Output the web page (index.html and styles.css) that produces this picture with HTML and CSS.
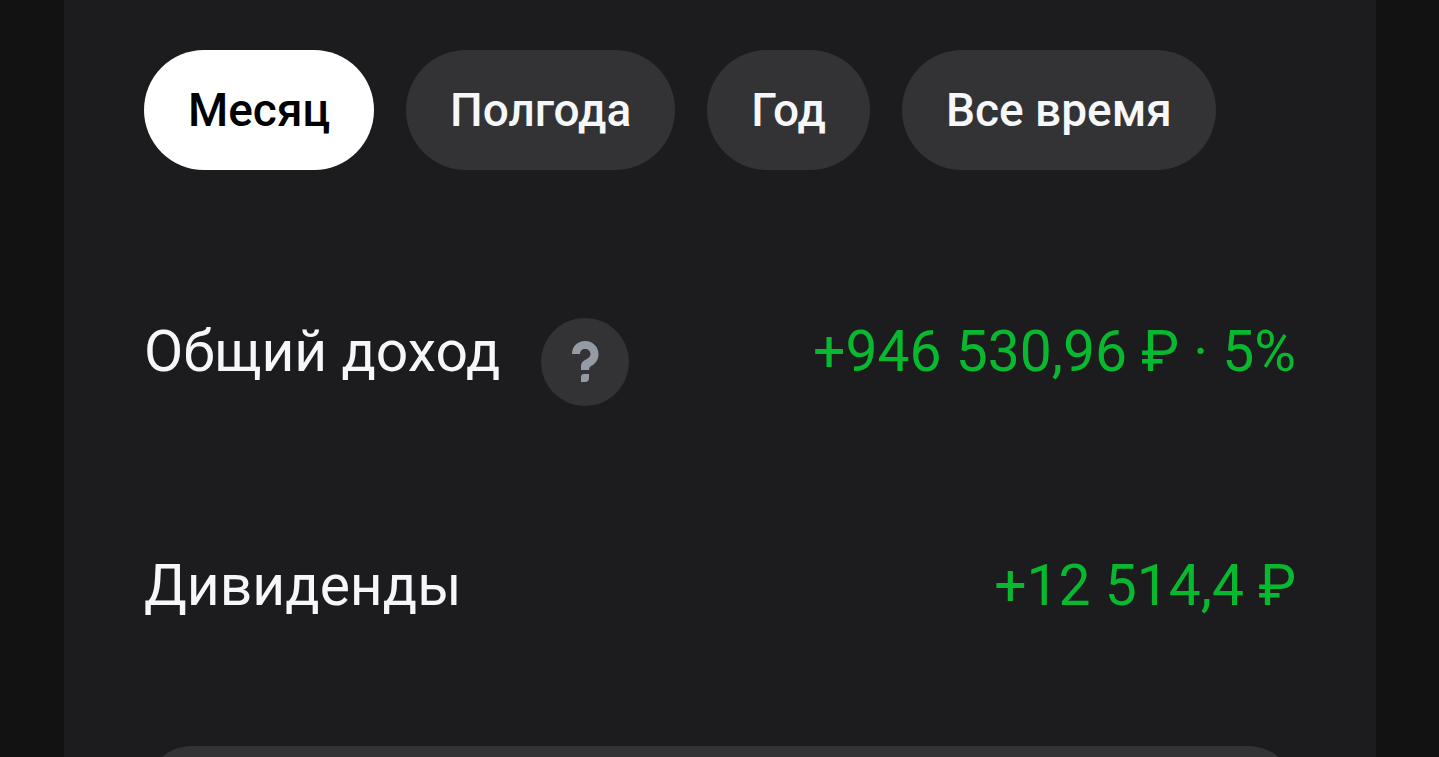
FILE: index.html
```
<!DOCTYPE html>
<html lang="ru">
<head>
<meta charset="utf-8">
<title>Доход</title>
<link rel="stylesheet" href="styles.css">
</head>
<body>
<main class="card">
  <div class="periods">
    <button class="chip chip-active" type="button">Месяц</button>
    <button class="chip" type="button">Полгода</button>
    <button class="chip" type="button">Год</button>
    <button class="chip" type="button">Все время</button>
  </div>
  <dl class="stats">
    <div class="row">
      <dt class="label">Общий доход
        <button class="help" type="button" aria-label="Подсказка">
          <svg class="help-icon" viewBox="0 0 88 88" aria-hidden="true">
            <path d="M31 36C31 28 37 23 44 23C52 23 57.500 29 57.500 36C57.500 42 54 46 50 48Q48 49 48 52H40V48Q40 44 44 42C47 40.500 49.500 39 49.500 36C49.500 33 47 31 44 31C41 31 39 33 39 36Z"/>
            <path d="M43 56H48V60Q48 64 44 64H40V59Q40 56 43 56Z"/>
          </svg>
        </button>
      </dt>
      <dd class="value">+946 530,96 ₽ · 5%</dd>
    </div>
    <div class="row">
      <dt class="label">Дивиденды</dt>
      <dd class="value">+12 514,4 ₽</dd>
    </div>
  </dl>
  <button class="more" type="button" aria-label="Подробнее"></button>
</main>
</body>
</html>
```
FILE: styles.css
```
* {
  box-sizing: border-box;
}

html {
  background: #121212;
}

body {
  margin: 0;
  height: 100vh;
  overflow: hidden;
  font-family: Roboto, "Noto Sans", sans-serif;
  color: #f6f7f9;
}

.card {
  min-height: 100vh;
  margin: 0 63px 0 64px;
  padding: 50px 80px 0;
  background: #1c1c1e;
}

.periods {
  display: flex;
  gap: 32px;
}

.chip {
  height: 120px;
  padding: 0 44px;
  border: 0;
  border-radius: 60px;
  background: #333335;
  color: #f6f7f9;
  font: 500 46px/56px Roboto, "Noto Sans", sans-serif;
  white-space: nowrap;
}

.chip-active {
  background: #fff;
  color: #000;
}

.stats {
  display: grid;
  gap: 126px;
  margin: 128px 0 106px;
}

.row {
  display: flex;
  justify-content: space-between;
  height: 108px;
  font-size: 57px;
  line-height: 108px;
  white-space: nowrap;
}

.label {
  display: flex;
  gap: 41px;
}

.value {
  margin: 0;
  color: #08b82f;
}

.help {
  width: 88px;
  height: 88px;
  margin-top: 20px;
  padding: 0;
  border: 0;
  border-radius: 50%;
  background: #333335;
}

.help-icon {
  display: block;
  fill: #959ba4;
}

.more {
  display: block;
  width: 100%;
  height: 176px;
  border: 0;
  border-radius: 48px;
  background: #333335;
}
```
